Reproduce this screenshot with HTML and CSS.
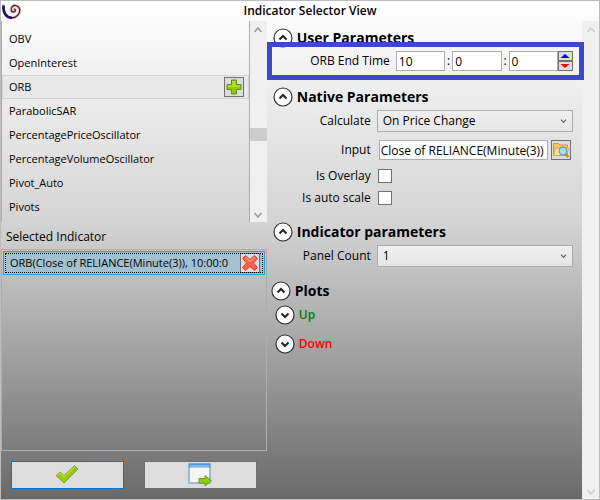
FILE: index.html
```
<!DOCTYPE html>
<html lang="en">
<head>
  <meta charset="utf-8">
  <title>Indicator Selector View</title>
  <link rel="stylesheet" href="styles.css">
</head>
<body>

  <!-- shared chevrons -->
  <svg class="defs" aria-hidden="true">
    <symbol id="expand-up" viewBox="0 0 20 20">
      <circle cx="10" cy="10" r="9" fill="#fff" stroke="#333" stroke-width="1.2"/>
      <path d="M6.5 11.5 L10 8 L13.5 11.5" fill="none" stroke="#222" stroke-width="2"/>
    </symbol>
    <symbol id="expand-down" viewBox="0 0 20 20">
      <circle cx="10" cy="10" r="9" fill="#fff" stroke="#333" stroke-width="1.2"/>
      <path d="M6.5 8.5 L10 12 L13.5 8.5" fill="none" stroke="#222" stroke-width="2"/>
    </symbol>
    <symbol id="scroll-up" viewBox="0 0 10 8">
      <path d="M1.5 6 L5 2 L8.5 6" fill="none" stroke="currentColor" stroke-width="1.5"/>
    </symbol>
    <symbol id="scroll-down" viewBox="0 0 10 8">
      <path d="M1.5 2 L5 6 L8.5 2" fill="none" stroke="currentColor" stroke-width="1.5"/>
    </symbol>
  </svg>

  <header class="titlebar">
    <svg class="logo" viewBox="0 0 20 20" aria-hidden="true">
      <path d="M2.4 4.5 C2 12 5.5 17 11 16.8 C16.5 16.4 19.3 12 18.7 8.3 C18 4.8 13.5 3.2 11.2 5.7 C9 8.3 10.4 11.4 12.8 11 C15 10.5 14.8 8 13 8.2" fill="none" stroke="#f3c9a5" stroke-width="3" stroke-linecap="round"/>
      <path d="M2.4 4.5 C2 12 5.5 17 11 16.8 C16.5 16.4 19.3 12 18.7 8.3 C18 4.8 13.5 3.2 11.2 5.7 C9 8.3 10.4 11.4 12.8 11 C15 10.5 14.8 8 13 8.2" fill="none" stroke="#2a1a66" stroke-width="1.3"/>
      <path d="M2.4 4.5 C2 12 5.5 17 11 16.8" fill="none" stroke="#1d1466" stroke-width="2.5"/>
    </svg>
    <h1>Indicator Selector View</h1>
  </header>

  <main class="content">
    <div class="left">
      <div class="list">
        <ul class="items">
          <li>OBV</li>
          <li>OpenInterest</li>
          <li class="hover">ORB
            <button class="icon-btn" aria-label="Add">
              <svg viewBox="0 0 18 18"><path d="M6.5 2 H11.5 V6.5 H16 V11.5 H11.5 V16 H6.5 V11.5 H2 V6.5 H6.5 Z" fill="#8fca0c" stroke="#5c8c1c"/><path d="M7.5 3 H10.5 V7.5 H15 V9 H3 V7.5 H7.5 Z" fill="#b9dd3c"/></svg>
            </button>
          </li>
          <li>ParabolicSAR</li>
          <li>PercentagePriceOscillator</li>
          <li>PercentageVolumeOscillator</li>
          <li>Pivot_Auto</li>
          <li>Pivots</li>
        </ul>
        <div class="scrollbar list-scroll">
          <svg><use href="#scroll-up"/></svg>
          <div class="thumb"></div>
          <svg><use href="#scroll-down"/></svg>
        </div>
      </div>

      <h2 class="list-title">Selected Indicator</h2>
      <div class="selected-list">
        <div class="selected">
          <span>ORB(Close of RELIANCE(Minute(3)), 10:00:0</span>
          <button class="icon-btn" aria-label="Remove">
            <svg viewBox="0 0 18 18"><path d="M4.5 1.5 L9 5.5 L13.5 1.5 L16.5 4.5 L12.5 9 L16.5 13.5 L13.5 16.5 L9 12.5 L4.5 16.5 L1.5 13.5 L5.5 9 L1.5 4.5 Z" fill="#f4624d" stroke="#d9402f" stroke-linejoin="round"/><path d="M4.5 3.5 L9 7.5 L13.5 3.5" fill="none" stroke="#ff9a88" stroke-width="1.2"/></svg>
          </button>
        </div>
      </div>

      <div class="actions">
        <button class="action default" aria-label="OK">
          <svg viewBox="0 0 26 26"><path d="M2 13.5 L6 10 L10 13.5 L20.5 3.5 L24 7 L10 21 Z" fill="#93c90e" stroke="#7fa43a" stroke-linejoin="round"/><path d="M3.5 13.5 L6 11.5 L10 15 L20.5 5" fill="none" stroke="#b4d93c" stroke-width="1.5"/></svg>
        </button>
        <button class="action" aria-label="Close">
          <svg viewBox="0 0 26 26"><rect x="2" y="2" width="21" height="19" fill="#f6f6f6" stroke="#7fa9cf" stroke-width="1.5"/><rect x="2" y="1.5" width="21" height="4" fill="#4a9ad6"/><path d="M3 4 H22" stroke="#a9d4f2"/><path d="M12 16.5 H18 V13.5 L24.5 18.8 L18 24 V21 H12 Z" fill="#93cb0a" stroke="#6f9c1c"/></svg>
        </button>
      </div>
    </div>

    <div class="right">
      <div class="params">
        <section>
          <h2><button class="expander"><svg><use href="#expand-up"/></svg>User Parameters</button></h2>
          <div class="row highlight">
            <label for="hour">ORB End Time</label>
            <div class="time">
              <input id="hour" type="text" value="10"><span>:</span>
              <input type="text" value="0" aria-label="Minutes"><span>:</span>
              <input type="text" value="0" aria-label="Seconds">
              <div class="spinner">
                <button aria-label="Up"><svg viewBox="0 0 12 6"><path d="M6 1 L10.5 5 H1.5 Z" fill="#00f"/></svg></button>
                <button aria-label="Down"><svg viewBox="0 0 12 6"><path d="M1.5 1 H10.5 L6 5 Z" fill="#f00"/></svg></button>
              </div>
            </div>
          </div>
        </section>

        <section>
          <h2><button class="expander"><svg><use href="#expand-up"/></svg>Native Parameters</button></h2>
          <div class="row">
            <label for="calculate">Calculate</label>
            <div class="combo">
              <select id="calculate"><option>On Price Change</option></select>
              <svg><use href="#scroll-down"/></svg>
            </div>
          </div>
          <div class="row input-row">
            <label for="input">Input</label>
            <div class="picker">
              <input id="input" type="text" value="Close of RELIANCE(Minute(3))">
              <button class="icon-btn" aria-label="Browse">
                <svg viewBox="0 0 18 18"><path d="M1.5 14 V2.5 H6.5 L8 4 H15.5 V14 Z" fill="#f5c65a" stroke="#d19a36"/><path d="M1.5 14.5 L3.5 7 H16.5 L15 14.5 Z" fill="#ffe39a" stroke="#d9a640"/><path d="M13.5 13 L16.5 16" stroke="#d08a2c" stroke-width="2.5"/><circle cx="11" cy="10" r="3.8" fill="#a9defa" stroke="#5b9dcb" stroke-width="1.3"/></svg>
              </button>
            </div>
          </div>
          <div class="row check-row">
            <label for="overlay">Is Overlay</label>
            <input id="overlay" type="checkbox">
          </div>
          <div class="row check-row">
            <label for="autoscale">Is auto scale</label>
            <input id="autoscale" type="checkbox">
          </div>
        </section>

        <section>
          <h2><button class="expander"><svg><use href="#expand-up"/></svg>Indicator parameters</button></h2>
          <div class="row">
            <label for="panel">Panel Count</label>
            <div class="combo">
              <select id="panel"><option>1</option></select>
              <svg><use href="#scroll-down"/></svg>
            </div>
          </div>
        </section>

        <section class="plots">
          <h2><button class="expander"><svg><use href="#expand-up"/></svg>Plots</button></h2>
          <h3><button class="expander up"><svg><use href="#expand-down"/></svg>Up</button></h3>
          <h3><button class="expander down"><svg><use href="#expand-down"/></svg>Down</button></h3>
        </section>
      </div>
      <div class="scrollbar disabled">
        <svg><use href="#scroll-up"/></svg>
        <svg><use href="#scroll-down"/></svg>
      </div>
    </div>
  </main>

</body>
</html>
```

FILE: styles.css
```
* {
  box-sizing: border-box;
}
body {
  margin: 0;
  min-height: 100vh;
  display: flex;
  flex-direction: column;
  border: 1px solid #bcbcbc;
  background: linear-gradient(#fff, #d3d3d3 45%, #696969);
  font-family: "Open Sans", "Noto Sans", sans-serif;
  font-size: 12px;
  line-height: 16px;
  color: #000;
}
h1, h2, h3, ul {
  margin: 0;
  padding: 0;
}
button, input, select {
  font: inherit;
  color: inherit;
  margin: 0;
}
svg {
  display: block;
}
.defs {
  position: absolute;
  width: 0;
  height: 0;
}

/* title bar */
.titlebar {
  display: grid;
  grid-template-columns: 20px 1fr;
  align-items: center;
  height: 20px;
}
.titlebar h1 {
  font-size: 12px;
  font-weight: 600;
  text-align: center;
}
.logo {
  width: 20px;
  height: 20px;
}

.content {
  flex: 1;
  display: grid;
  grid-template-columns: minmax(0, 4fr) minmax(0, 5fr);
}
.left {
  display: flex;
  flex-direction: column;
}

/* indicator list */
.list {
  display: flex;
  border-left: 1px solid #abadb3;
}
.items {
  flex: 1;
  list-style: none;
  padding: 6px 0 3px;
  font-size: 11px;
}
.items li {
  display: flex;
  align-items: center;
  justify-content: space-between;
  height: 24px;
  padding: 0 4px 0 6px;
  border: 1px solid transparent;
}
.items .hover {
  background: #e8e8e8;
  border-color: #d4d4d4;
}
.icon-btn {
  flex: none;
  width: 20px;
  height: 20px;
  padding: 0;
  border: 1px solid #707070;
  background: #ddd;
}
.icon-btn svg {
  width: 18px;
  height: 18px;
}
.scrollbar {
  display: flex;
  flex-direction: column;
  align-items: center;
  justify-content: space-between;
  flex: none;
  width: 17px;
  padding: 5px 0 3px;
  background: #f0f0f0;
  color: #999;
}
.scrollbar svg {
  width: 10px;
  height: 8px;
}
.list-scroll {
  width: 18px;
  border-left: 1px solid #abadb3;
}
.thumb {
  width: 17px;
  height: 13px;
  margin: 94px 0 auto;
  background: #cdcdcd;
}
.disabled {
  color: #ccc;
}

/* selected indicators */
.list-title {
  padding: 7px 5px 4px;
  font-size: 12px;
  font-weight: 400;
}
.selected-list {
  flex: 1;
  padding: 1px;
  border: 1px solid #abadb3;
}
.selected {
  display: flex;
  align-items: center;
  justify-content: space-between;
  height: 24px;
  padding: 0 4px 0 6px;
  border: 1px solid #26a0da;
  background: #a4c1d1;
  outline: 1px dotted #000;
  outline-offset: -3px;
  font-size: 11px;
}
.selected span {
  white-space: nowrap;
}
.actions {
  display: grid;
  grid-template-columns: 1fr 1fr;
  gap: 20px;
  padding: 10px;
}
.action {
  display: flex;
  align-items: center;
  justify-content: center;
  height: 28px;
  padding: 0;
  border: 1px solid #707070;
  background: #ddd;
}
.action svg {
  width: 26px;
  height: 26px;
}
.default {
  border-color: #0078d7;
}

/* parameters */
.right {
  display: flex;
}
.params {
  flex: 1;
  padding: 7px 9px 0 6px;
}
section {
  margin-bottom: 13px;
}
.expander {
  display: flex;
  align-items: center;
  gap: 4px;
  padding: 0;
  border: 0;
  background: none;
}
.expander svg {
  width: 20px;
  height: 20px;
}
h2 .expander {
  height: 20px;
  font-size: 14px;
  font-weight: 700;
}
.row {
  display: grid;
  grid-template-columns: 98px 1fr;
  column-gap: 6px;
  align-items: center;
  padding: 3px 0;
}
.row label {
  text-align: right;
}
.row input[type="text"] {
  width: 100%;
  min-width: 0;
  height: 20px;
  padding: 0 2px;
  border: 1px solid #abadb3;
  background: #fff;
}
.highlight {
  position: relative;
  grid-template-columns: 117px 1fr;
}
.highlight::after {
  content: "";
  position: absolute;
  inset: -6px -11px -6px -6px;
  border: 5px solid #3f48cc;
  pointer-events: none;
}
.time {
  display: flex;
  align-items: center;
}
.time span {
  flex: none;
  width: 7px;
  text-align: center;
}
.spinner {
  flex: none;
  width: 15px;
}
.spinner button {
  display: flex;
  align-items: center;
  justify-content: center;
  width: 15px;
  height: 10px;
  padding: 0;
  border: 1px solid #707070;
  background: #ddd;
}
.spinner svg {
  width: 12px;
  height: 6px;
}
.combo {
  position: relative;
}
.combo select {
  display: block;
  width: 100%;
  height: 22px;
  padding: 0 5px;
  border: 1px solid #acacac;
  border-radius: 0;
  background: linear-gradient(#f0f0f0, #e5e5e5);
  appearance: none;
}
.combo svg {
  position: absolute;
  top: 8px;
  right: 6px;
  width: 7px;
  height: 6px;
  color: #606060;
  pointer-events: none;
}
.input-row {
  height: 30px;
}
.picker {
  display: flex;
  gap: 3px;
  padding: 0 2px;
}
.picker input[type="text"] {
  padding: 0 1px;
}
.check-row {
  height: 22px;
  padding: 0;
}
.check-row input {
  width: 14px;
  height: 14px;
  margin-left: 1px;
  border: 1px solid #707070;
  background: #fff;
  appearance: none;
}

/* plots */
.plots {
  margin: -2px 0 0 -2px;
}
.plots h3 {
  padding: 4px 0 5px 4px;
}
.plots h3 .expander {
  font-size: 12px;
  font-weight: 600;
}
.plots .up {
  color: #008000;
}
.plots .down {
  color: #f00;
}
```
